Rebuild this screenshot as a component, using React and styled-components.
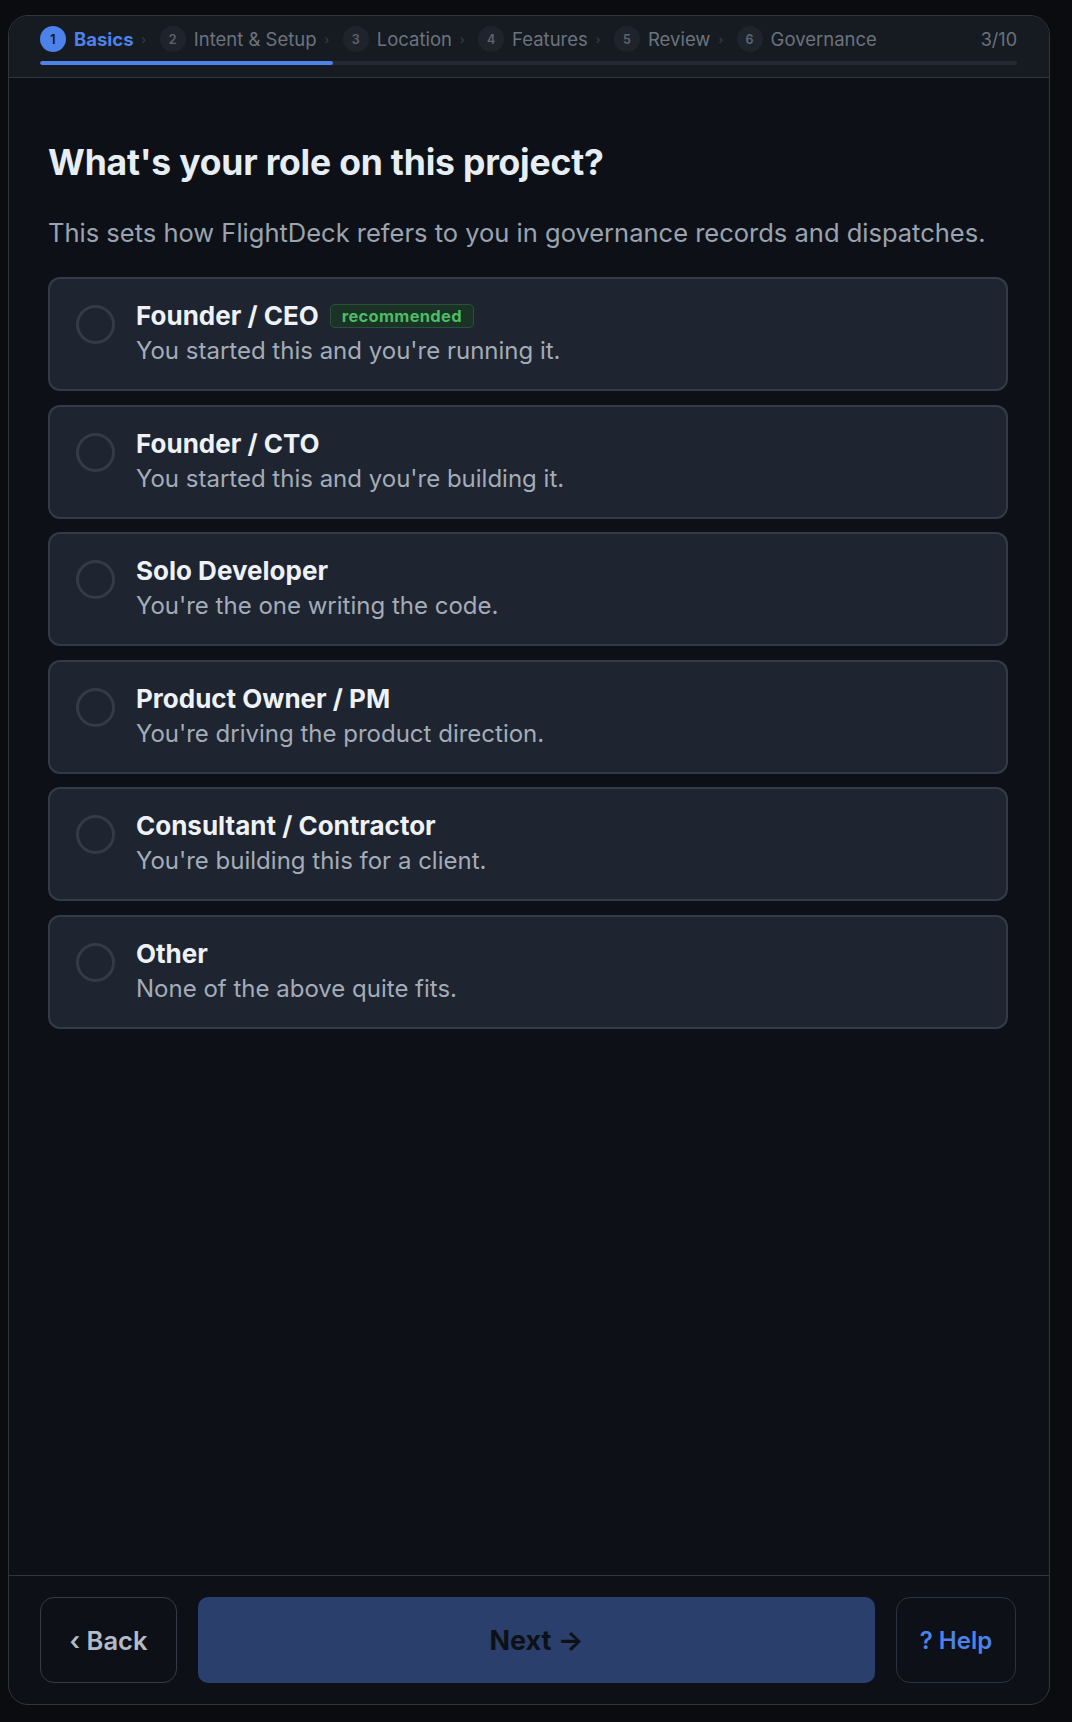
import React from 'react';
import styled, { createGlobalStyle } from 'styled-components';

const GlobalStyle = createGlobalStyle`
  html, body {
    margin: 0;
    padding: 0;
    background: #0a0c10;
  }
  body {
    font-family: Inter, "Noto Sans", "Liberation Sans", sans-serif;
    -webkit-font-smoothing: antialiased;
  }
`;

const Frame = styled.div`
  box-sizing: border-box;
  width: 1042px;
  height: 1690px;
  margin: 15px 22px 17px 8px;
  display: flex;
  flex-direction: column;
  background: #0d1117;
  border: 1.5px solid #30363d;
  border-radius: 20px;
  overflow: hidden;
`;

const Header = styled.div`
  background: #161b22;
  border-bottom: 1.5px solid #30363d;
  padding: 10px 32px 12px 31px;
`;

const StepRow = styled.div`
  display: flex;
  align-items: center;
  height: 26px;
`;

const Step = styled.div`
  display: flex;
  align-items: center;
  gap: 8px;
`;

const StepNum = styled.span`
  width: 26px;
  height: 26px;
  border-radius: 50%;
  display: inline-flex;
  align-items: center;
  justify-content: center;
  font-size: 12.5px;
  font-weight: 600;
  background: ${p => (p.$active ? '#4c82ea' : '#1f242c')};
  color: ${p => (p.$active ? '#0d1117' : '#5d6570')};
`;

const StepLabel = styled.span`
  font-size: 18.5px;
  font-weight: ${p => (p.$active ? 700 : 400)};
  color: ${p => (p.$active ? '#4c82ea' : '#6b737e')};
`;

const Chevron = styled.span`
  font-size: 12px;
  color: #3a414b;
  margin: 0 13.5px 0 8px;
`;

const Count = styled.span`
  margin-left: auto;
  font-size: 18px;
  color: #6b737e;
`;

const Track = styled.div`
  margin-top: 9px;
  height: 4px;
  border-radius: 2px;
  background: #242a33;
  overflow: hidden;
`;

const Fill = styled.div`
  height: 100%;
  background: #4c82ea;
  border-radius: 2px;
`;

const Body = styled.div`
  flex: 1;
  padding: 64px 41px 0 39px;
`;

const Title = styled.h1`
  margin: 0;
  font-size: 35.5px;
  line-height: 42px;
  font-weight: 700;
  color: #e6edf3;
  letter-spacing: -0.2px;
`;

const Subtitle = styled.p`
  margin: 33px 0 0;
  font-size: 25.5px;
  line-height: 32px;
  color: #9aa3b0;
`;

const Options = styled.div`
  margin-top: 28px;
  display: flex;
  flex-direction: column;
  gap: 13.5px;
`;

const Card = styled.div`
  box-sizing: border-box;
  height: 114px;
  display: flex;
  align-items: flex-start;
  gap: 21px;
  padding: 22px 26px;
  background: #1e2430;
  border: 2.5px solid #343b48;
  border-radius: 12px;
`;

const Radio = styled.span`
  box-sizing: border-box;
  flex: none;
  width: 39px;
  height: 39px;
  margin-top: 4px;
  border-radius: 50%;
  border: 3px solid #343b47;
`;

const CardText = styled.div`
  display: flex;
  flex-direction: column;
`;

const CardTitle = styled.div`
  display: flex;
  align-items: center;
  gap: 11px;
  font-size: 26px;
  line-height: 30px;
  font-weight: 700;
  color: #eef2f6;
`;

const Badge = styled.span`
  font-size: 16.5px;
  line-height: 20px;
  font-weight: 700;
  color: #4bbd63;
  background: #1b3226;
  border: 1.5px solid #2b5139;
  border-radius: 5px;
  padding: 1px 11px;
  letter-spacing: 0.3px;
`;

const CardDesc = styled.div`
  margin-top: 5px;
  font-size: 24px;
  line-height: 30px;
  color: #a3acb8;
`;

const Footer = styled.div`
  border-top: 1.5px solid #30363d;
  padding: 21px 33px 21px 31px;
  display: flex;
  gap: 21px;
`;

const Button = styled.button`
  box-sizing: border-box;
  height: 86px;
  border-radius: ${p => (p.$primary ? '10px' : '14px')};
  font-family: inherit;
  font-size: ${p => p.$size};
  font-weight: ${p => (p.$primary ? 700 : 600)};
  display: flex;
  align-items: center;
  justify-content: center;
  gap: 8px;
  cursor: pointer;
  flex: ${p => (p.$primary ? 1 : 'none')};
  width: ${p => p.$width || 'auto'};
  background: ${p => (p.$primary ? '#2a3f6b' : 'transparent')};
  border: ${p => (p.$primary ? 'none' : `1.5px solid ${p.$border}`)};
  color: ${p => p.$color};
`;

const steps = ['Basics', 'Intent & Setup', 'Location', 'Features', 'Review', 'Governance'];

const roles = [
  { title: 'Founder / CEO', desc: "You started this and you're running it.", badge: 'recommended' },
  { title: 'Founder / CTO', desc: "You started this and you're building it." },
  { title: 'Solo Developer', desc: "You're the one writing the code." },
  { title: 'Product Owner / PM', desc: "You're driving the product direction." },
  { title: 'Consultant / Contractor', desc: "You're building this for a client." },
  { title: 'Other', desc: 'None of the above quite fits.' },
];

const App = () => (
  <>
    <GlobalStyle />
    <Frame>
      <Header>
        <StepRow>
          {steps.map((s, i) => (
            <React.Fragment key={s}>
              <Step>
                <StepNum $active={i === 0}>{i + 1}</StepNum>
                <StepLabel $active={i === 0}>{s}</StepLabel>
              </Step>
              {i < steps.length - 1 && <Chevron>›</Chevron>}
            </React.Fragment>
          ))}
          <Count>3/10</Count>
        </StepRow>
        <Track>
          <Fill style={{ width: `${(3 / 10) * 100}%` }} />
        </Track>
      </Header>

      <Body>
        <Title>What's your role on this project?</Title>
        <Subtitle>This sets how FlightDeck refers to you in governance records and dispatches.</Subtitle>
        <Options>
          {roles.map(r => (
            <Card key={r.title}>
              <Radio />
              <CardText>
                <CardTitle>
                  {r.title}
                  {r.badge && <Badge>{r.badge}</Badge>}
                </CardTitle>
                <CardDesc>{r.desc}</CardDesc>
              </CardText>
            </Card>
          ))}
        </Options>
      </Body>

      <Footer>
        <Button $size="25.5px" $width="137px" $border="#363c47" $color="#b3bbc7">‹ Back</Button>
        <Button $primary $size="27px" $color="#0d1117">Next →</Button>
        <Button $size="24px" $width="120px" $border="#2a3345" $color="#4c82ea">? Help</Button>
      </Footer>
    </Frame>
  </>
);

export default App;
